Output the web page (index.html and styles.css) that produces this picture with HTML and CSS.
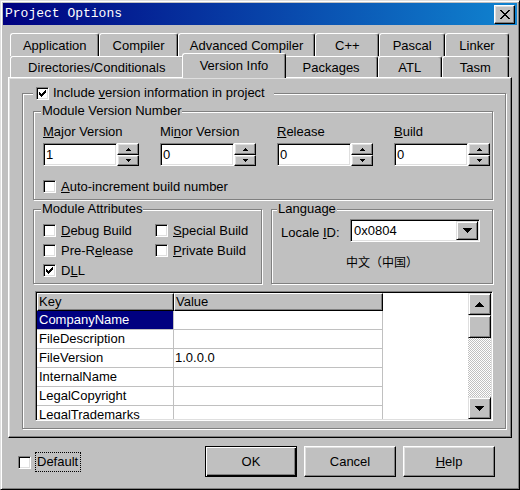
FILE: index.html
```html
<!DOCTYPE html>
<html lang="en">
<head>
<meta charset="utf-8">
<title>Project Options</title>
<link rel="stylesheet" href="styles.css">
</head>
<body>
<div class="window">
  <div class="titlebar">
    <span class="title">Project Options</span>
    <span class="close"><svg width="10" height="9" viewBox="0 0 10 9" shape-rendering="crispEdges"><path d="M0 0h2v1H0zM8 0h2v1H8zM1 1h2v1H1zM7 1h2v1H7zM2 2h2v1H2zM6 2h2v1H6zM3 3h4v1H3zM4 4h2v1H4zM3 5h4v1H3zM2 6h2v1H2zM6 6h2v1H6zM1 7h2v1H1zM7 7h2v1H7zM0 8h2v1H0zM8 8h2v1H8z"/></svg></span>
  </div>

  <div class="tabs">
    <div class="tabrow back">
      <div class="tab">Application</div>
      <div class="tab">Compiler</div>
      <div class="tab">Advanced Compiler</div>
      <div class="tab">C++</div>
      <div class="tab">Pascal</div>
      <div class="tab">Linker</div>
    </div>
    <div class="tabrow front">
      <div class="tab">Directories/Conditionals</div>
      <div class="tab active">Version Info</div>
      <div class="tab">Packages</div>
      <div class="tab">ATL</div>
      <div class="tab">Tasm</div>
    </div>
  </div>

  <div class="panel">
    <div class="group outer">
      <div class="legend check-legend">
        <span class="cb"><svg width="7" height="7" viewBox="0 0 7 7" shape-rendering="crispEdges"><path d="M0 2h1v3H0zM1 3h1v3H1zM2 4h1v3H2zM3 3h1v3H3zM4 2h1v3H4zM5 1h1v3H5zM6 0h1v3H6z"/></svg></span>
        <span>Include <u>v</u>ersion information in project</span>
      </div>

      <div class="group mvn">
        <div class="legend">Module Version Number</div>
        <div class="spins">
          <div class="field">
            <div class="label"><u>M</u>ajor Version</div>
            <div class="spin"><div class="edit">1</div><div class="updown"><span class="ud"><svg width="5" height="3" viewBox="0 0 5 3" shape-rendering="crispEdges"><path d="M2 0h1v1H2zM1 1h3v1H1zM0 2h5v1H0z"/></svg></span><span class="ud low"><svg width="5" height="3" viewBox="0 0 5 3" shape-rendering="crispEdges"><path d="M0 0h5v1H0zM1 1h3v1H1zM2 2h1v1H2z"/></svg></span></div></div>
          </div>
          <div class="field">
            <div class="label">Mi<u>n</u>or Version</div>
            <div class="spin"><div class="edit">0</div><div class="updown"><span class="ud"><svg width="5" height="3" viewBox="0 0 5 3" shape-rendering="crispEdges"><path d="M2 0h1v1H2zM1 1h3v1H1zM0 2h5v1H0z"/></svg></span><span class="ud low"><svg width="5" height="3" viewBox="0 0 5 3" shape-rendering="crispEdges"><path d="M0 0h5v1H0zM1 1h3v1H1zM2 2h1v1H2z"/></svg></span></div></div>
          </div>
          <div class="field">
            <div class="label"><u>R</u>elease</div>
            <div class="spin"><div class="edit">0</div><div class="updown"><span class="ud"><svg width="5" height="3" viewBox="0 0 5 3" shape-rendering="crispEdges"><path d="M2 0h1v1H2zM1 1h3v1H1zM0 2h5v1H0z"/></svg></span><span class="ud low"><svg width="5" height="3" viewBox="0 0 5 3" shape-rendering="crispEdges"><path d="M0 0h5v1H0zM1 1h3v1H1zM2 2h1v1H2z"/></svg></span></div></div>
          </div>
          <div class="field">
            <div class="label"><u>B</u>uild</div>
            <div class="spin"><div class="edit">0</div><div class="updown"><span class="ud"><svg width="5" height="3" viewBox="0 0 5 3" shape-rendering="crispEdges"><path d="M2 0h1v1H2zM1 1h3v1H1zM0 2h5v1H0z"/></svg></span><span class="ud low"><svg width="5" height="3" viewBox="0 0 5 3" shape-rendering="crispEdges"><path d="M0 0h5v1H0zM1 1h3v1H1zM2 2h1v1H2z"/></svg></span></div></div>
          </div>
        </div>
        <div class="check auto"><span class="cb"></span><span><u>A</u>uto-increment build number</span></div>
      </div>

      <div class="row2">
        <div class="group attrs">
          <div class="legend">Module Attributes</div>
          <div class="attr-grid">
            <div class="check"><span class="cb"></span><span><u>D</u>ebug Build</span></div>
            <div class="check"><span class="cb"></span><span><u>S</u>pecial Build</span></div>
            <div class="check"><span class="cb"></span><span>Pre-R<u>e</u>lease</span></div>
            <div class="check"><span class="cb"></span><span><u>P</u>rivate Build</span></div>
            <div class="check"><span class="cb"><svg width="7" height="7" viewBox="0 0 7 7" shape-rendering="crispEdges"><path d="M0 2h1v3H0zM1 3h1v3H1zM2 4h1v3H2zM3 3h1v3H3zM4 2h1v3H4zM5 1h1v3H5zM6 0h1v3H6z"/></svg></span><span>D<u>L</u>L</span></div>
          </div>
        </div>
        <div class="group lang">
          <div class="legend">Language</div>
          <div class="locale">
            <span class="locale-label">Locale <u>I</u>D:</span>
            <div class="combo">
              <span class="combo-text">0x0804</span>
              <span class="combo-btn"><svg width="9" height="5" viewBox="0 0 9 5" shape-rendering="crispEdges"><path d="M0 0h9v1H0zM1 1h7v1H1zM2 2h5v1H2zM3 3h3v1H3zM4 4h1v1H4z"/></svg></span>
            </div>
          </div>
          <div class="langname">中文（中国）</div>
        </div>
      </div>

      <div class="list">
        <div class="table">
          <div class="lrow head"><div class="hcell key">Key</div><div class="hcell val">Value</div></div>
          <div class="lrow"><div class="cell key sel">CompanyName</div><div class="cell val"></div></div>
          <div class="lrow"><div class="cell key">FileDescription</div><div class="cell val"></div></div>
          <div class="lrow"><div class="cell key">FileVersion</div><div class="cell val">1.0.0.0</div></div>
          <div class="lrow"><div class="cell key">InternalName</div><div class="cell val"></div></div>
          <div class="lrow"><div class="cell key">LegalCopyright</div><div class="cell val"></div></div>
          <div class="lrow"><div class="cell key">LegalTrademarks</div><div class="cell val"></div></div>
        </div>
        <div class="scrollbar">
          <div class="sb-btn"><svg width="9" height="5" viewBox="0 0 9 5" shape-rendering="crispEdges"><path d="M4 0h1v1H4zM3 1h3v1H3zM2 2h5v1H2zM1 3h7v1H1zM0 4h9v1H0z"/></svg></div>
          <div class="sb-thumb"></div>
          <div class="sb-track"></div>
          <div class="sb-btn"><svg width="9" height="5" viewBox="0 0 9 5" shape-rendering="crispEdges"><path d="M0 0h9v1H0zM1 1h7v1H1zM2 2h5v1H2zM3 3h3v1H3zM4 4h1v1H4z"/></svg></div>
        </div>
      </div>
    </div>
  </div>

  <div class="footer">
    <div class="check default-check"><span class="cb"></span><span class="focus">Default</span></div>
    <div class="buttons">
      <div class="btn default">OK</div>
      <div class="btn">Cancel</div>
      <div class="btn"><u>H</u>elp</div>
    </div>
  </div>
</div>
</body>
</html>
```

FILE: styles.css
```css
* { box-sizing: border-box; }
html, body { margin: 0; padding: 0; }
body {
  width: 520px;
  height: 490px;
  overflow: hidden;
  background: #c0c0c0;
  font-family: "Liberation Sans", Arial, sans-serif;
  font-size: 13px;
  color: #000;
}
u { text-decoration: underline; text-decoration-thickness: 1px; text-underline-offset: 1px; }

.window {
  width: 520px;
  height: 490px;
  display: flex;
  flex-direction: column;
  background: #c0c0c0;
  border: 1px solid;
  border-color: #dfdfdf #000 #000 #dfdfdf;
  box-shadow: inset 1px 1px #fff, inset -1px -1px #808080;
  padding: 2px;
}

/* title bar */
.titlebar {
  flex: none;
  height: 22px;
  display: flex;
  align-items: center;
  padding-left: 2px;
  background: linear-gradient(90deg, #000080, #1084d0);
}
.title {
  color: #fff;
  font-family: "Liberation Mono", "DejaVu Sans Mono", monospace;
  font-size: 13px;
  line-height: 22px;
  white-space: pre;
}
.close {
  margin-left: auto;
  margin-right: 2px;
  width: 21px;
  height: 19px;
  display: flex;
  align-items: center;
  justify-content: center;
  background: #c0c0c0;
  border: 1px solid;
  border-color: #fff #000 #000 #fff;
  box-shadow: inset -1px -1px #808080, inset 1px 1px #dfdfdf;
}
.close svg { display: block; }

/* tabs */
.tabs { flex: none; margin: 8px 5px 0; }
.tabrow { display: flex; padding: 0 3px 0 2px; }
.tabrow.back { height: 23px; }
.tabrow.front { height: 21px; }
.tab {
  flex: 1 1 auto;
  min-width: 64px;
  padding: 0 13px;
  display: flex;
  align-items: center;
  justify-content: center;
  white-space: nowrap;
  background: #c0c0c0;
  border: 1px solid;
  border-bottom: none;
  border-color: #fff #000 #000 #fff;
  box-shadow: inset -1px 0 #808080;
  border-radius: 3px 3px 0 0;
}
.tab.active {
  position: relative;
  z-index: 1;
  margin: -3px -2px -1px;
  padding-bottom: 2px;
}

/* page */
.panel {
  flex: none;
  height: 361px;
  margin: 0 5px;
  display: flex;
  flex-direction: column;
  padding: 15px 5px 8px 13px;
  border: 1px solid;
  border-color: #fff #000 #000 #fff;
  box-shadow: inset -1px -1px #808080, inset 1px 1px #dfdfdf;
}

.group {
  display: flex;
  flex-direction: column;
  border: 1px solid #808080;
  box-shadow: inset 1px 1px #fff, 1px 1px #fff;
}
.legend {
  align-self: flex-start;
  height: 14px;
  line-height: 14px;
  margin-top: -8px;
  margin-left: -2px;
  padding: 0 1px;
  background: #c0c0c0;
  white-space: nowrap;
}

.outer { flex: 1; padding: 0 12px 7px 10px; }
.check-legend {
  display: flex;
  align-items: center;
  gap: 4px;
  margin-left: 0;
  padding: 0 9px 0 3px;
}

.cb {
  flex: none;
  width: 13px;
  height: 13px;
  display: flex;
  align-items: center;
  justify-content: center;
  background: #fff;
  border: 1px solid;
  border-color: #808080 #fff #fff #808080;
  box-shadow: inset 1px 1px #000, inset -1px -1px #dfdfdf;
}
.cb svg { display: block; }

.check {
  display: flex;
  align-items: center;
  gap: 5px;
  height: 15px;
  line-height: 15px;
  white-space: nowrap;
}

/* module version number */
.mvn { margin-top: 11px; padding: 0 2px 5px 9px; }
.spins {
  display: grid;
  grid-template-columns: repeat(4, 96px);
  column-gap: 21px;
  margin-top: 6px;
}
.field { display: flex; flex-direction: column; gap: 4px; }
.label { height: 15px; line-height: 15px; white-space: nowrap; }
.spin { display: flex; height: 23px; }
.edit {
  width: 74px;
  background: #fff;
  border: 1px solid;
  border-color: #808080 #fff #fff #808080;
  box-shadow: inset 1px 1px #000, inset -1px -1px #dfdfdf;
  padding-left: 2px;
  line-height: 21px;
}
.updown { width: 22px; display: flex; flex-direction: column; }
.ud {
  height: 12px;
  display: flex;
  align-items: center;
  justify-content: center;
  background: #c0c0c0;
  border: 1px solid;
  border-color: #fff #000 #000 #fff;
  box-shadow: inset -1px -1px #808080, inset 1px 1px #dfdfdf;
}
.ud.low { height: 11px; }
.ud svg { display: block; }
.auto { margin-top: 13px; }

/* attributes + language */
.row2 {
  display: grid;
  grid-template-columns: 229px 222px;
  column-gap: 9px;
  margin-top: 9px;
}
.attrs { padding: 0 4px 5px 9px; }
.attr-grid {
  display: grid;
  grid-template-columns: 112px auto;
  row-gap: 5px;
  margin-top: 7px;
}
.lang { padding: 0 9px 5px 9px; }
.lang .legend { margin-left: -4px; }
.locale { display: flex; align-items: center; margin-top: 3px; }
.locale-label { width: 69px; padding-top: 3px; white-space: nowrap; }
.combo {
  width: 130px;
  height: 23px;
  display: flex;
  background: #fff;
  border: 1px solid;
  border-color: #808080 #fff #fff #808080;
  box-shadow: inset 1px 1px #000, inset -1px -1px #dfdfdf;
  padding: 1px;
}
.combo-text { flex: 1; padding-left: 2px; line-height: 19px; }
.combo-btn {
  width: 22px;
  display: flex;
  align-items: center;
  justify-content: center;
  background: #c0c0c0;
  border: 1px solid;
  border-color: #dfdfdf #000 #000 #dfdfdf;
  box-shadow: inset 1px 1px #fff, inset -1px -1px #808080;
}
.combo-btn svg { display: block; }
.langname {
  margin-top: 12px;
  text-align: center;
  line-height: 15px;
  font-family: "Noto Sans CJK SC", "Liberation Sans", sans-serif;
  font-size: 12px;
}

/* list view */
.list {
  flex: none;
  height: 130px;
  margin: 7px 0 0 2px;
  display: flex;
  background: #fff;
  border: 1px solid;
  border-color: #808080 #fff #fff #808080;
  box-shadow: inset 1px 1px #000, inset -1px -1px #dfdfdf;
  padding: 1px;
}
.table { flex: 1; overflow: hidden; }
.lrow { display: flex; height: 19px; }
.lrow.head { height: 18px; }
.key { width: 137px; }
.val { width: 209px; }
.hcell {
  background: #c0c0c0;
  border: 1px solid;
  border-color: #fff #000 #000 #fff;
  box-shadow: inset -1px -1px #808080;
  padding-left: 1px;
  line-height: 16px;
  white-space: nowrap;
}
.cell {
  border-right: 1px solid #c0c0c0;
  border-bottom: 1px solid #c0c0c0;
  padding-left: 2px;
  line-height: 18px;
  white-space: nowrap;
}
.cell.sel { background: #000080; color: #fff; border-right-color: #c0c0c0; }
.val.cell { padding-left: 1px; }

.scrollbar { width: 23px; display: flex; flex-direction: column; }
.sb-btn, .sb-thumb {
  flex: none;
  display: flex;
  align-items: center;
  justify-content: center;
  background: #c0c0c0;
  border: 1px solid;
  border-color: #dfdfdf #000 #000 #dfdfdf;
  box-shadow: inset 1px 1px #fff, inset -1px -1px #808080;
}
.sb-btn { height: 22px; }
.sb-btn svg { display: block; }
.sb-thumb { height: 23px; }
.sb-track {
  flex: 1;
  background: repeating-conic-gradient(#fff 0 25%, #c0c0c0 0 50%) 0 0 / 2px 2px;
}

/* footer */
.footer {
  flex: 1;
  display: flex;
  align-items: flex-start;
  padding: 8px 22px 0 15px;
}
.default-check { margin-top: 6px; height: 20px; gap: 4px; }
.focus {
  height: 20px;
  line-height: 18px;
  padding: 0 2px 0 1px;
  border: 1px dotted #000;
}
.buttons { margin-left: auto; display: flex; gap: 7px; }
.btn {
  width: 92px;
  height: 31px;
  display: flex;
  align-items: center;
  justify-content: center;
  background: #c0c0c0;
  border: 1px solid;
  border-color: #fff #000 #000 #fff;
  box-shadow: inset -1px -1px #808080, inset 1px 1px #dfdfdf;
}
.btn.default {
  border-color: #000;
  box-shadow: inset 1px 1px #fff, inset -1px -1px #000, inset -2px -2px #808080;
}
```
